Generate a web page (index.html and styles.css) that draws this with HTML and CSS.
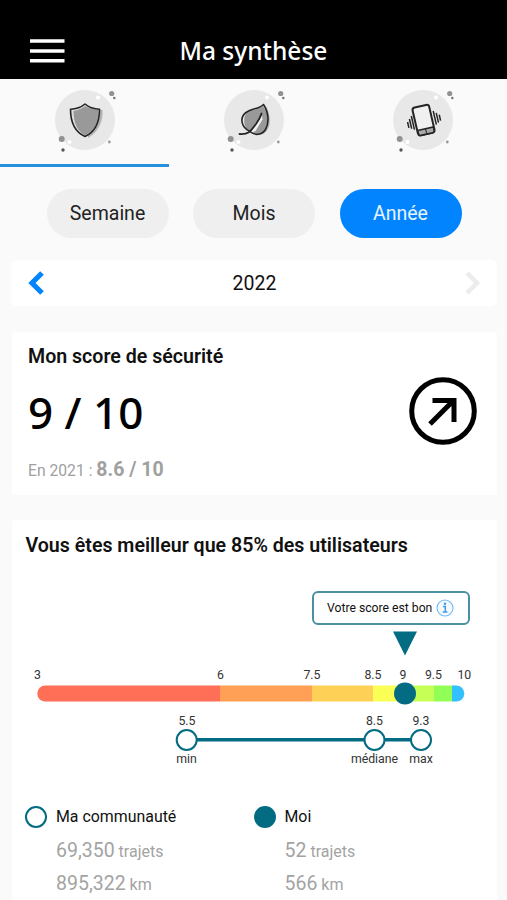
FILE: index.html
```
<!DOCTYPE html>
<html lang="fr">
<head>
    <meta charset="UTF-8">
    <meta name="viewport" content="width=device-width, initial-scale=1.0">
    <title>Ma synthèse</title>
    <link rel="stylesheet" href="styles.css">
</head>
<body>
    <!-- shared background for the tab icons -->
    <svg class="defs" width="0" height="0">
        <defs>
            <g id="bubble">
                <circle cx="32" cy="32" r="30" fill="#e8e8e8"/>
                <circle cx="45" cy="9.5" r="2" fill="#fff"/>
                <circle cx="16.500" cy="54" r="2" fill="#fff"/>
                <circle cx="58.700" cy="5.500" r="2.600" fill="#929292"/>
                <circle cx="61.300" cy="10" r="1.300" fill="#777"/>
                <circle cx="8.700" cy="51" r="3" fill="#929292"/>
                <circle cx="10" cy="62" r="1.700" fill="#555"/>
                <circle cx="56.300" cy="54" r="1.400" fill="#999"/>
            </g>
        </defs>
    </svg>

    <header class="header">
        <svg class="menu" viewBox="0 0 35 24">
            <path d="M0 2h34.500M0 12h34.500M0 21.700h34.500" stroke="#fff" stroke-width="3.600"/>
        </svg>
        <h1>Ma synthèse</h1>
    </header>

    <nav class="tabs">
        <div class="tab active">
            <svg viewBox="0 0 64 64">
                <use href="#bubble"/>
                <path d="M34.500 17.500c5 4 10 4 15 4.500 1 11-4 22-14.500 28z" fill="#b4b4b4"/>
                <path d="M32 16c-4.500 3.800-9 5-14.500 5.200C17.500 33 21 43.500 32 48.500 43 43.500 46.500 33 46.500 21.200 41 21 36.500 19.800 32 16z" fill="#dedede"/>
                <path d="M32 18c-3 2.600-6.500 4-11.500 5C20.500 34 24 43 32 47.500 42 43 45.500 33 45.500 22 40 21.500 36 20 32 18z" fill="#999"/>
                <path d="M32 16c-4.500 3.800-9 5-14.500 5.200C17.500 33 21 43.500 32 48.500 43 43.500 46.500 33 46.500 21.200 41 21 36.500 19.800 32 16z" fill="none" stroke="#242424" stroke-width="1.600" stroke-linejoin="round"/>
            </svg>
        </div>
        <div class="tab">
            <svg viewBox="0 0 64 64">
                <use href="#bubble"/>
                <path d="M44 18c5 10 6 23-3 28l-4 1z" fill="#b4b4b4"/>
                <path d="M41 18c-6 5-13 3-17 8-4 6-1 15 4 18L39 29 31 45c5 2 10 1 12-4 4-7 3-16-2-23z" fill="#999"/>
                <path d="M29 44.500L40 27.500l.5 4L33.500 43z" fill="#f2f2f2"/>
                <path d="M41.500 16.500C37 21.500 30 20 24 24.500 17 30 19.500 39.500 28 43.500c5 4.500 12 3.500 15.500-2C47.500 34.500 46.500 24 41.500 16.500z" fill="none" stroke="#242424" stroke-width="1.600" stroke-linejoin="round"/>
                <path d="M17.500 46C28 47 30 41 34 36c3-4 4.500-7 5.500-10.500" fill="none" stroke="#242424" stroke-width="1.800" stroke-linecap="round"/>
            </svg>
        </div>
        <div class="tab">
            <svg viewBox="0 0 64 64">
                <use href="#bubble"/>
                <g transform="rotate(-13 32 32)" fill="none" stroke="#242424">
                    <rect x="24" y="18" width="17" height="28.500" rx="2.600" fill="#f0f0f0" stroke-width="2"/>
                    <path d="M24.500 41h16v3.500q0 2-2 2h-12q-2 0-2-2z" fill="#aaa" stroke-width="1.600"/>
                    <path d="M32.500 41v5" stroke-width="1"/>
                    <path d="M21.500 25.500v14M19 28v10M16.500 30.500v6M44 25.500v14M46.500 28v10M49 30.500v6" stroke-width="1.500"/>
                </g>
            </svg>
        </div>
    </nav>

    <main>
        <div class="periods">
            <button type="button" class="period">Semaine</button>
            <button type="button" class="period">Mois</button>
            <button type="button" class="period selected">Année</button>
        </div>

        <div class="date-nav">
            <svg class="arrow" viewBox="0 0 16 24"><path d="M14 2L4 12l10 10" fill="none" stroke="#0284fe" stroke-width="5.200"/></svg>
            <span>2022</span>
            <svg class="arrow" viewBox="0 0 16 24"><path d="M2 2l10 10L2 22" fill="none" stroke="#ececec" stroke-width="4.400"/></svg>
        </div>

        <section class="card score">
            <div>
                <h2>Mon score de sécurité</h2>
                <p class="value">9 / 10</p>
                <p class="previous">En 2021 : <b>8.6 / 10</b></p>
            </div>
            <svg class="trend" viewBox="0 0 68 68" fill="none" stroke="#000">
                <circle cx="34" cy="34" r="31.300" stroke-width="5"/>
                <path d="M23.500 23.500H45V45M44 24L21 47" stroke-width="5"/>
            </svg>
        </section>

        <section class="card compare">
            <h2>Vous êtes meilleur que 85% des utilisateurs</h2>
            <div class="tip">
                <span>Votre score est bon</span>
                <svg class="info" viewBox="0 0 18 18">
                    <circle cx="9" cy="9" r="8" fill="#f4faff" stroke="#70b8f5" stroke-width="1.100"/>
                    <circle cx="9" cy="4.800" r="1.200" fill="#4297e6"/>
                    <path d="M7 7.600h2.300v5.300M6.700 13h4.700" fill="none" stroke="#4297e6" stroke-width="1.500"/>
                </svg>
            </div>
            <svg class="chart" viewBox="12 625 485 145">
                <path d="M393 631.500h24l-12 24z" fill="#036b82"/>

                <!-- scale -->
                <g class="labels">
                    <text x="37.500" y="678.500">3</text>
                    <text x="220.500" y="678.500">6</text>
                    <text x="312" y="678.500">7.5</text>
                    <text x="373" y="678.500">8.5</text>
                    <text x="403" y="678.500">9</text>
                    <text x="433.500" y="678.500">9.5</text>
                    <text x="464.300" y="678.500">10</text>
                </g>
                <clipPath id="round"><rect x="37.300" y="685.500" width="427" height="16" rx="8"/></clipPath>
                <g clip-path="url(#round)">
                    <rect x="37" y="685" width="183" height="17" fill="#ff6f57"/>
                    <rect x="220" y="685" width="92" height="17" fill="#ffa056"/>
                    <rect x="312" y="685" width="61" height="17" fill="#ffd056"/>
                    <rect x="373" y="685" width="31" height="17" fill="#faff56"/>
                    <rect x="404" y="685" width="30" height="17" fill="#c6ff56"/>
                    <rect x="434" y="685" width="18" height="17" fill="#91ff56"/>
                    <rect x="452" y="685" width="13" height="17" fill="#33c0ff"/>
                </g>
                <circle cx="405" cy="693.500" r="11" fill="#036b82"/>

                <!-- community -->
                <path d="M187 739.700h234" stroke="#036b82" stroke-width="3.600"/>
                <g fill="#fff" stroke="#036b82" stroke-width="2">
                    <circle cx="186.700" cy="740" r="10"/>
                    <circle cx="374.500" cy="740" r="10"/>
                    <circle cx="421" cy="740" r="10"/>
                </g>
                <g class="labels">
                    <text x="187" y="725">5.5</text>
                    <text x="374.500" y="725">8.5</text>
                    <text x="421" y="725">9.3</text>
                    <text x="186.500" y="763">min</text>
                    <text x="374.500" y="763">médiane</text>
                    <text x="421" y="763">max</text>
                </g>
            </svg>
            <div class="legend">
                <div class="group">
                    <span class="dot"></span>
                    <div>
                        <h3>Ma communauté</h3>
                        <p><b>69,350</b> trajets</p>
                        <p><b>895,322</b> km</p>
                    </div>
                </div>
                <div class="group">
                    <span class="dot full"></span>
                    <div>
                        <h3>Moi</h3>
                        <p><b>52</b> trajets</p>
                        <p><b>566</b> km</p>
                    </div>
                </div>
            </div>
        </section>
    </main>
</body>
</html>
```
FILE: styles.css
```
* {
    box-sizing: border-box;
}
body {
    font-family: Roboto, sans-serif;
    background-color: #fafafa;
    color: #111;
    height: 900px;
    margin: 0;
    overflow: hidden;
}
h1, h2, h3, p {
    margin: 0;
}
svg {
    display: block;
    flex-shrink: 0;
}
.defs {
    height: 0;
}
.header {
    background-color: #000;
    height: 79px;
    padding: 22px 0 0 30px;
    display: flex;
    align-items: center;
}
.menu {
    width: 35px;
    height: 24px;
}
h1 {
    margin-left: 114.500px;
    color: #fff;
    font-family: "Noto Sans", sans-serif;
    font-size: 24.500px;
    font-weight: 500;
    line-height: 56px;
}
.tabs {
    display: flex;
    height: 88px;
}
.tab {
    flex: 1;
    padding-top: 9px;
    border-bottom: 3px solid transparent;
}
.tab svg {
    width: 64px;
    height: 64px;
    margin: 0 auto;
    overflow: visible;
}
.tab.active {
    border-color: #2690dc;
}
.periods {
    display: flex;
    justify-content: center;
    gap: 24.500px;
    padding: 22px 0 0 1px;
}
.period {
    width: 122px;
    height: 49px;
    border: none;
    border-radius: 25px;
    padding: 0;
    background-color: #efefef;
    color: #222;
    font-family: Roboto, sans-serif;
    font-size: 19.500px;
}
.period.selected {
    background-color: #0284fe;
    color: #e8f4ff;
}
.date-nav {
    display: flex;
    align-items: center;
    justify-content: space-between;
    height: 46px;
    margin: 22px 10px 26px 11px;
    padding: 0 16px 0 17px;
    border-radius: 6px;
    background-color: #fff;
    font-size: 19.500px;
}
.arrow {
    width: 16px;
    height: 24px;
}
.card {
    margin: 0 10px 0 12px;
    background-color: #fff;
    border-radius: 4px;
}
h2 {
    font-size: 19.600px;
    font-weight: 600;
    line-height: 24px;
}
.score {
    display: flex;
    justify-content: space-between;
    height: 163px;
    margin-bottom: 25px;
    padding: 13px 20px 0 16px;
}
.value {
    margin-top: 13px;
    color: #000;
    font-family: "Noto Sans", sans-serif;
    font-size: 44px;
    font-weight: 500;
    line-height: 60px;
}
.previous {
    margin-top: 16px;
    color: #a0a0a0;
    font-size: 15.700px;
    line-height: 24px;
}
.previous b {
    font-size: 19.500px;
}
.trend {
    width: 68px;
    height: 68px;
    margin-top: 32px;
}
.compare {
    height: 400px;
    padding-top: 14px;
}
.compare h2 {
    margin-left: 13.500px;
}
.tip {
    display: flex;
    align-items: center;
    gap: 4px;
    width: 158px;
    height: 34px;
    margin: 33px 27px 0 auto;
    padding-left: 13px;
    border: 2px solid #4a90a0;
    border-radius: 6px;
    font-size: 12.200px;
}
.info {
    width: 18px;
    height: 18px;
}
.chart {
    width: 485px;
    height: 145px;
}
.labels {
    fill: #333;
    font-size: 12.300px;
    text-anchor: middle;
}
.legend {
    display: grid;
    grid-template-columns: 228.500px 1fr;
    padding: 35px 0 0 13px;
}
.group {
    display: flex;
    gap: 9px;
}
.dot {
    width: 22px;
    height: 22px;
    margin-top: 1px;
    border: 2px solid #036b82;
    border-radius: 50%;
}
.dot.full {
    background-color: #036b82;
}
h3 {
    margin-bottom: 7px;
    font-size: 15.900px;
    font-weight: 400;
    line-height: 23px;
}
.legend p {
    color: #a3a3a3;
    font-size: 16px;
    line-height: 32px;
}
.legend b {
    font-size: 19.500px;
    font-weight: 400;
}
```
